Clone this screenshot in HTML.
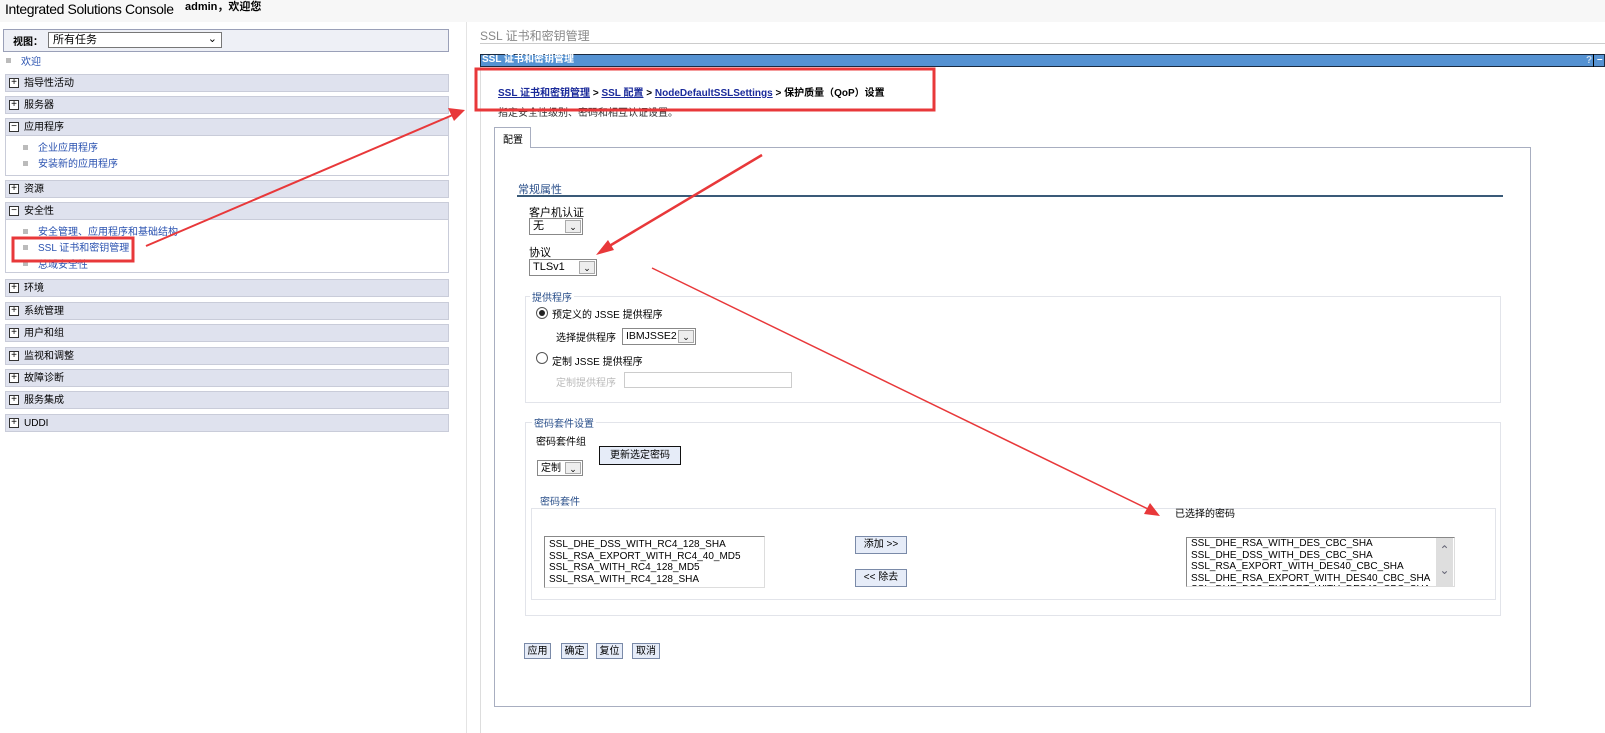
<!DOCTYPE html>
<html><head><meta charset="utf-8"><style>
*{margin:0;padding:0;box-sizing:border-box}
body{width:1605px;height:733px;background:#fff;font-family:"Liberation Sans","Noto Sans CJK SC",sans-serif;font-size:11px;color:#000;position:relative;overflow:hidden}
.a{position:absolute;white-space:nowrap}
.bar{position:absolute;left:5px;width:444px;height:18px;background:#dfe2ee;border:1px solid #c9ccd9;font-size:10px;line-height:16px;padding-left:18px;padding-top:1px}
.bar i{position:absolute;left:3px;top:3px;width:10px;height:10px;border:1px solid #333;font-style:normal;font-size:10px;line-height:8px;text-align:center;background:#fff}
.sub{position:absolute;left:5px;width:444px;border:1px solid #c9ccd9;border-top:none;background:#fff}
.lk{color:#2a52b0;font-size:10px}
.sq{position:absolute;width:5px;height:5px;background:#bbb}
.sel{position:absolute;border:1px solid #888;background:#fff;font-size:11px;line-height:15px;padding-left:3px}
.sel b{position:absolute;right:1px;top:1px;bottom:1px;width:16px;border:1px solid #aaa;background:#eee;font-weight:normal;text-align:center;font-size:9px;line-height:13px}
.btn{position:absolute;border:1px solid #7a8aa8;background:#e6ecf8;font-size:10px;text-align:center;line-height:15px}
.fs{position:absolute;border:1px solid #e2e4ea}
.lg{position:absolute;background:#fff;color:#2a4f8a;font-size:10px;padding:0 2px}
.list{position:absolute;border:1px solid #888;border-right-color:#ddd;border-bottom-color:#ddd;background:#fff;font-family:"Liberation Sans",sans-serif;font-size:10px;line-height:11.5px;padding:2px 4px;overflow:hidden}
</style></head><body>
<div class="a" style="left:0;top:0;width:1605px;height:22px;background:#f7f7f7"></div>
<div class="a" style="left:5px;top:1px;font-size:14px;line-height:16px;letter-spacing:-0.4px">Integrated Solutions Console</div>
<div class="a" style="left:185px;top:0px;font-size:11px;line-height:14px;font-weight:bold">admin，欢迎您</div>

<div class="a" style="left:3px;top:29px;width:446px;height:23px;background:#eef0f6;border:1px solid #9aa0b8"></div>
<div class="a" style="left:13px;top:33px;font-size:10px;font-weight:bold">视图：</div>
<div class="a" style="left:48px;top:32px;width:174px;height:16px;border:1px solid #777;background:#fff;font-size:11px;line-height:14px;padding-left:4px">所有任务<span style="position:absolute;right:4px;top:-1px;font-size:11px">&#8964;</span></div>
<div class="sq" style="left:6px;top:58px"></div><div class="a lk" style="left:21px;top:53px">欢迎</div>

<div class="bar" style="top:74px"><i>+</i>指导性活动</div>
<div class="bar" style="top:96px"><i>+</i>服务器</div>
<div class="bar" style="top:118px"><i>−</i>应用程序</div>
<div class="sub" style="top:136px;height:40px"></div>
<div class="sq" style="left:23px;top:145px"></div><div class="a lk" style="left:38px;top:139px">企业应用程序</div>
<div class="sq" style="left:23px;top:161px"></div><div class="a lk" style="left:38px;top:155px">安装新的应用程序</div>
<div class="bar" style="top:180px"><i>+</i>资源</div>
<div class="bar" style="top:202px"><i>−</i>安全性</div>
<div class="sub" style="top:220px;height:53px"></div>
<div class="sq" style="left:23px;top:229px"></div><div class="a lk" style="left:38px;top:223px">安全管理、应用程序和基础结构</div>
<div class="sq" style="left:23px;top:245px"></div><div class="a lk" style="left:38px;top:239px">SSL 证书和密钥管理</div>
<div class="sq" style="left:23px;top:261px"></div><div class="a lk" style="left:38px;top:256px">总域安全性</div>
<div class="bar" style="top:279px"><i>+</i>环境</div>
<div class="bar" style="top:302px"><i>+</i>系统管理</div>
<div class="bar" style="top:324px"><i>+</i>用户和组</div>
<div class="bar" style="top:347px"><i>+</i>监视和调整</div>
<div class="bar" style="top:369px"><i>+</i>故障诊断</div>
<div class="bar" style="top:391px"><i>+</i>服务集成</div>
<div class="bar" style="top:414px"><i>+</i>UDDI</div>

<div class="a" style="left:466px;top:22px;width:1px;height:711px;background:#e4e4e4"></div>
<div class="a" style="left:480px;top:27px;font-size:12px;color:#888">SSL 证书和密钥管理</div>
<div class="a" style="left:480px;top:43px;width:1125px;height:1px;background:#ccc"></div>
<div class="a" style="left:480px;top:54px;width:1125px;height:13px;background:#5592d2;border:1px solid #1a2a40"></div>
<div class="a" style="left:482px;top:53px;font-size:10px;font-weight:bold;color:#fff;line-height:13px">SSL 证书和密钥管理</div>
<div class="a" style="left:1586px;top:55px;font-size:10px;font-weight:bold;color:#cde;line-height:11px">?</div>
<div class="a" style="left:1593px;top:54px;width:1px;height:13px;background:#000"></div>
<div class="a" style="left:1597px;top:54px;font-size:10px;color:#fff;font-weight:bold">–</div>
<div class="a" style="left:480px;top:67px;width:1px;height:666px;background:#ddd"></div>

<div class="a" style="left:498px;top:84px;font-size:10px;font-weight:bold"><u style="color:#1a2a9a">SSL 证书和密钥管理</u> &gt; <u style="color:#1a2a9a">SSL 配置</u> &gt; <u style="color:#1a2a9a">NodeDefaultSSLSettings</u> &gt; 保护质量（QoP）设置</div>
<div class="a" style="left:498px;top:104px;font-size:10px;color:#333">指定安全性级别、密码和相互认证设置。</div>

<div class="a" style="left:494px;top:147px;width:1037px;height:560px;border:1px solid #a8aec0"></div>
<div class="a" style="left:494px;top:127px;width:37px;height:21px;border:1px solid #a8aec0;border-bottom:none;background:#fff;font-size:10px;padding:3px 0 0 8px">配置</div>

<div class="a" style="left:518px;top:181px;font-size:11px;color:#2a4f8a">常规属性</div>
<div class="a" style="left:517px;top:195px;width:986px;height:2px;background:#3a5a78"></div>
<div class="a" style="left:529px;top:204px;font-size:11px">客户机认证</div>
<div class="sel" style="left:529px;top:218px;width:54px;height:17px">无<b>&#8964;</b></div>
<div class="a" style="left:529px;top:244px;font-size:11px">协议</div>
<div class="sel" style="left:529px;top:259px;width:68px;height:17px">TLSv1<b>&#8964;</b></div>

<div class="fs" style="left:525px;top:296px;width:976px;height:107px"></div>
<div class="lg" style="left:530px;top:289px">提供程序</div>
<div class="a" style="left:536px;top:307px;width:12px;height:12px;border:1px solid #555;border-radius:50%;background:#fff"><span style="position:absolute;left:2px;top:2px;width:6px;height:6px;border-radius:50%;background:#222"></span></div>
<div class="a" style="left:552px;top:306px;font-size:10px">预定义的 JSSE 提供程序</div>
<div class="a" style="left:556px;top:329px;font-size:10px">选择提供程序</div>
<div class="sel" style="left:622px;top:328px;width:74px;height:17px;font-size:10.5px">IBMJSSE2<b>&#8964;</b></div>
<div class="a" style="left:536px;top:352px;width:12px;height:12px;border:1px solid #555;border-radius:50%;background:#fff"></div>
<div class="a" style="left:552px;top:353px;font-size:10px">定制 JSSE 提供程序</div>
<div class="a" style="left:556px;top:374px;font-size:10px;color:#bbb">定制提供程序</div>
<div class="a" style="left:624px;top:372px;width:168px;height:16px;border:1px solid #ccc"></div>

<div class="fs" style="left:525px;top:422px;width:976px;height:194px"></div>
<div class="lg" style="left:532px;top:415px">密码套件设置</div>
<div class="a" style="left:536px;top:433px;font-size:10px">密码套件组</div>
<div class="btn" style="left:599px;top:446px;width:82px;height:19px;border:1px solid #111;background:#e6ecf8;line-height:17px">更新选定密码</div>
<div class="sel" style="left:537px;top:460px;width:46px;height:16px;font-size:10px">定制<b>&#8964;</b></div>

<div class="fs" style="left:531px;top:508px;width:965px;height:92px"></div>
<div class="lg" style="left:538px;top:493px">密码套件</div>
<div class="list" style="left:544px;top:536px;width:221px;height:52px">SSL_DHE_DSS_WITH_RC4_128_SHA<br>SSL_RSA_EXPORT_WITH_RC4_40_MD5<br>SSL_RSA_WITH_RC4_128_MD5<br>SSL_RSA_WITH_RC4_128_SHA</div>
<div class="btn" style="left:855px;top:536px;width:52px;height:18px">添加 &gt;&gt;</div>
<div class="btn" style="left:855px;top:569px;width:52px;height:18px">&lt;&lt; 除去</div>
<div class="a" style="left:1175px;top:505px;font-size:10px">已选择的密码</div>
<div class="list" style="left:1186px;top:537px;width:269px;height:50px;padding-top:0;padding-right:20px">SSL_DHE_RSA_WITH_DES_CBC_SHA<br>SSL_DHE_DSS_WITH_DES_CBC_SHA<br>SSL_RSA_EXPORT_WITH_DES40_CBC_SHA<br>SSL_DHE_RSA_EXPORT_WITH_DES40_CBC_SHA<br>SSL_DHE_DSS_EXPORT_WITH_DES40_CBC_SHA</div>
<div class="a" style="left:1436px;top:538px;width:17px;height:48px;background:#dedede;color:#667;font-size:12px;text-align:center;line-height:20px;padding-top:2px">&#8963;<br>&#8964;</div>

<div class="btn" style="left:524px;top:643px;width:27px;height:16px">应用</div>
<div class="btn" style="left:561px;top:643px;width:27px;height:16px">确定</div>
<div class="btn" style="left:596px;top:643px;width:27px;height:16px">复位</div>
<div class="btn" style="left:632px;top:643px;width:28px;height:16px">取消</div>

<svg class="a" style="left:0;top:0" width="1605" height="733">
<g fill="none" stroke="#e8383a">
<rect x="13" y="238" width="120" height="23" stroke-width="3"/>
<rect x="476" y="69" width="458" height="41" stroke-width="3"/>
<line x1="146" y1="246" x2="455" y2="114" stroke-width="2"/>
<line x1="762" y1="155" x2="606" y2="248" stroke-width="2.5"/>
<line x1="652" y1="268" x2="1150" y2="510" stroke-width="1.5"/>
</g>
<g fill="#e8383a">
<polygon points="465,110 448,108 454,121"/>
<polygon points="596,255 608,240 614,250"/>
<polygon points="1160,516 1144,514 1150,503"/>
</g>
</svg>
</body></html>
